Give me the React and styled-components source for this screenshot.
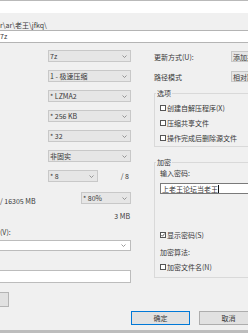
import React from 'react'
import styled, { createGlobalStyle } from 'styled-components'

const GlobalStyle = createGlobalStyle`
  html, body {
    margin: 0;
    padding: 0;
    background: #f0f0f0;
  }
  body {
    font-family: "Noto Sans CJK SC", "Noto Sans", sans-serif;
    font-size: 7px;
    color: #383838;
  }
`

const Window = styled.div`
  width: 248px;
  height: 333px;
  overflow: hidden;
  display: flex;
  flex-direction: column;
  background: #f0f0f0;
`

const TitleStrip = styled.div`
  flex-shrink: 0;
  height: 12px;
  background: #fff;
  border-top: 1px solid #b9b9b9;
`

const PathText = styled.div`
  margin-top: 7px;
  height: 10px;
  line-height: 10px;
  white-space: nowrap;
`

const NameBox = styled.div`
  box-sizing: border-box;
  height: 13px;
  line-height: 11px;
  background: #fff;
  border-top: 1px solid #b4b4b4;
  border-bottom: 1px solid #b4b4b4;
  white-space: nowrap;
`

const Body = styled.div`
  display: grid;
  grid-template-columns: 131px 1fr;
  column-gap: 23px;
`

const LeftCol = styled.div`
  display: flex;
  flex-direction: column;
  padding-top: 7px;
`

const SelectStack = styled.div`
  display: flex;
  flex-direction: column;
  gap: 8px;
  padding-left: 48px;
`

const Select = styled.div`
  box-sizing: border-box;
  flex-shrink: 0;
  width: ${p => p.$w || '100%'};
  height: ${p => p.$h || 12}px;
  display: flex;
  align-items: center;
  justify-content: space-between;
  padding: 0 3px 0 1px;
  background: #e6e6e6;
  border: 1px solid #c8c8c8;
  line-height: 10px;
  white-space: nowrap;
`

const SplitRow = styled.div`
  display: flex;
  justify-content: space-between;
  align-items: flex-start;
  margin-top: ${p => p.$mt || 0}px;
  white-space: nowrap;
`

const SideText = styled.span`
  line-height: 10px;
  margin-top: ${p => p.$mt || 0}px;
  padding-right: ${p => p.$pr || 0}px;
`

const Line = styled.div`
  height: 10px;
  line-height: 10px;
  margin-top: ${p => p.$mt || 0}px;
  text-align: ${p => p.$align || 'left'};
  padding-right: ${p => p.$pr || 0}px;
  white-space: nowrap;
`

const Field = styled.div`
  box-sizing: border-box;
  height: ${p => p.$h}px;
  margin-top: ${p => p.$mt}px;
  margin-left: ${p => p.$ml || 0}px;
  display: flex;
  align-items: center;
  justify-content: flex-end;
  padding: 0 4px 0 2px;
  background: #fff;
  border: 1px solid #bcbcbc;
  white-space: nowrap;
`

const PlainButton = styled.div`
  box-sizing: border-box;
  width: 49px;
  height: 15px;
  margin: 9px 0 0 -40px;
  background: #e1e1e1;
  border: 1px solid #b4b4b4;
`

const RightCol = styled.div`
  display: flex;
  flex-direction: column;
  padding-top: 8px;
  min-width: 0;
`

const OptionRow = styled.div`
  display: grid;
  grid-template-columns: 77px 1fr;
  align-items: center;
  height: 11px;
  margin-top: ${p => p.$mt || 0}px;
  white-space: nowrap;
`

const Group = styled.fieldset`
  margin: ${p => p.$mt}px -20px 0 0;
  padding: ${p => p.$pt}px 0 ${p => p.$pb}px 5px;
  border: 1px solid #d9d9d9;
  min-width: 0;
  display: flex;
  flex-direction: column;

  legend {
    height: 10px;
    line-height: 10px;
    padding: 0 1px;
    margin-left: -4px;
  }
`

const CheckRow = styled.div`
  display: flex;
  align-items: center;
  gap: 1px;
  height: 10px;
  margin-top: ${p => p.$mt || 0}px;
  white-space: nowrap;
`

const Box = styled.span`
  box-sizing: border-box;
  width: 6px;
  height: 6px;
  display: inline-flex;
  align-items: center;
  justify-content: center;
  border: 1px solid #555;
  background: #fff;
`

const PasswordBox = styled.div`
  box-sizing: border-box;
  height: 11px;
  margin-top: 5px;
  display: flex;
  align-items: center;
  padding-left: 1px;
  background: #fff;
  border: 1px solid #7a7a7a;
  white-space: nowrap;
`

const Caret = styled.span`
  width: 1px;
  height: 8px;
  background: #111;
`

const ButtonBar = styled.div`
  display: flex;
  justify-content: flex-end;
  gap: 9px;
  margin: 4px -10px 0 0;
`

const Button = styled.button`
  box-sizing: border-box;
  width: 59px;
  height: 14px;
  padding: 0;
  font: inherit;
  color: #383838;
  background: #e1e1e1;
  border: 1px solid ${p => (p.$primary ? '#0078d7' : '#adadad')};
`

const BottomEdge = styled.div`
  margin-top: auto;
  height: 3px;
  background: #bdbdbd;
`

const Chevron = () => (
  <svg width="5" height="3" viewBox="0 0 5 3">
    <path d="M0.5 0.5 L2.5 2.5 L4.5 0.5" fill="none" stroke="#808080" strokeWidth="0.8" />
  </svg>
)

const Drop = ({ children, w, h }) => (
  <Select $w={w} $h={h}>
    <span>{children}</span>
    <Chevron />
  </Select>
)

const Check = ({ checked, children, mt }) => (
  <CheckRow $mt={mt}>
    <Box>
      {checked && (
        <svg width="4" height="4" viewBox="0 0 4 4">
          <path d="M0.4 2 L1.5 3.2 L3.6 0.6" fill="none" stroke="#333" strokeWidth="0.8" />
        </svg>
      )}
    </Box>
    <span>{children}</span>
  </CheckRow>
)

export default function App() {
  return (
    <Window>
      <GlobalStyle />
      <TitleStrip />
      <PathText>{'r\\ar\\老王\\jfkq\\'}</PathText>
      <NameBox>7z</NameBox>

      <Body>
        <LeftCol>
          <SelectStack>
            <Drop>7z</Drop>
            <Drop>1 - 极速压缩</Drop>
            <Drop>* LZMA2</Drop>
            <Drop>* 256 KB</Drop>
            <Drop>* 32</Drop>
            <Drop>非固实</Drop>
            <SplitRow>
              <Drop w="50px">* 8</Drop>
              <SideText $mt={1} $pr={2}>/ 8</SideText>
            </SplitRow>
          </SelectStack>
          <SplitRow $mt={10}>
            <SideText $mt={4}>/ 16305 MB</SideText>
            <Drop w="50px">* 80%</Drop>
          </SplitRow>
          <Line $mt={5} $align="right" $pr={1}>3 MB</Line>
          <Line $mt={6}>(V):</Line>
          <Field $h={11} $mt={3} $ml={-10}>
            <Chevron />
          </Field>
          <Field $h={13} $mt={19} $ml={-10} />
          <PlainButton />
        </LeftCol>

        <RightCol>
          <OptionRow>
            <span>更新方式(U):</span>
            <Drop w="60px" h={11}>添加并替换文件</Drop>
          </OptionRow>
          <OptionRow $mt={9}>
            <span>路径模式</span>
            <Drop w="60px" h={11}>相对路径</Drop>
          </OptionRow>

          <Group $mt={6} $pt={5} $pb={3}>
            <legend>选项</legend>
            <Check>创建自解压程序(X)</Check>
            <Check mt={5}>压缩共享文件</Check>
            <Check mt={5}>操作完成后删除源文件</Check>
          </Group>

          <Group $mt={10} $pt={1} $pb={5}>
            <legend>加密</legend>
            <Line>输入密码:</Line>
            <PasswordBox>
              <span>上老王论坛当老王</span>
              <Caret />
            </PasswordBox>
            <Check checked mt={36}>显示密码(S)</Check>
            <Line $mt={7}>加密算法:</Line>
            <Check mt={5}>加密文件名(N)</Check>
          </Group>
        </RightCol>
      </Body>

      <ButtonBar>
        <Button $primary>确定</Button>
        <Button>取消</Button>
      </ButtonBar>
      <BottomEdge />
    </Window>
  )
}
